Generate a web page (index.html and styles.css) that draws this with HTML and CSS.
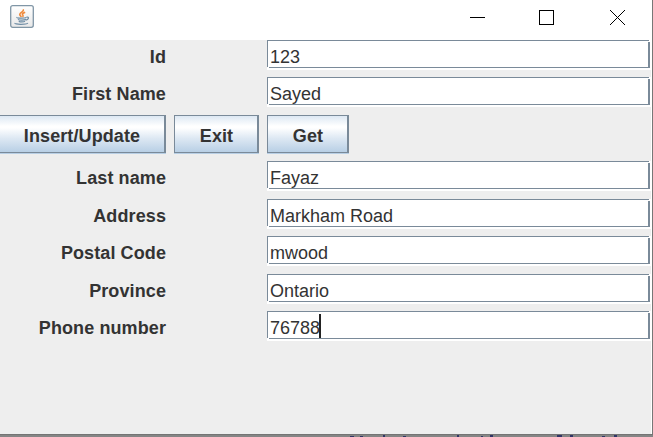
FILE: index.html
```
<!DOCTYPE html>
<html lang="en">
<head>
<meta charset="utf-8">
<title>Form</title>
<link rel="stylesheet" href="styles.css">
</head>
<body>
<main class="window">
  <header class="titlebar">
    <svg class="java" width="26" height="26" viewBox="0 0 26 26">
      <defs><linearGradient id="tile" x1="0" y1="0" x2="0" y2="1"><stop offset="0" stop-color="#fff"/><stop offset="1" stop-color="#e8e8e8"/></linearGradient></defs>
      <rect x=".7" y=".7" width="22.600" height="21.600" rx="2" fill="url(#tile)" stroke="#8096a6" stroke-width="1.300"/>
      <path d="M13.200 4.300c1.200 2.600-4.600 3.700-3.300 5.900.4.700 1.200 1.100 1.500 1.700M15.200 7.200c-2.800 1-3.400 2-2.300 3 .5.500.2 1.100-.4 1.700" fill="none" stroke="#ef8a3c" stroke-width="1.600"/>
      <path d="M7 12.300c-1.200 1 7.500 1.200 9.300.1M8 14.300c1 1.100 6.200 1 8 .1M8.800 16.200c1.300 1 5 .9 6.200.1M16.500 12.100c3.200-.5 2.200 2.600-.8 3.100M5 18c-1 1.700 11.400 1.700 12.900.2" fill="none" stroke="#6f8da5" stroke-width="1.200"/>
    </svg>
    <svg class="controls" width="155" height="16" viewBox="0 0 155 16" fill="none" stroke="#000" shape-rendering="crispEdges">
      <path d="M0 7.500h15M69.500.5h14v14h-14z"/>
      <path d="M140 0l15 15M155 0l-15 15" shape-rendering="auto"/>
    </svg>
  </header>
  <form class="form">
    <span class="label">Id</span><span class="field">123</span>
    <span class="label">First Name</span><span class="field">Sayed</span>
    <button class="button" type="button">Insert/Update</button><button class="button" type="button">Exit</button><button class="button get" type="button">Get</button>
    <span class="label">Last name</span><span class="field">Fayaz</span>
    <span class="label">Address</span><span class="field">Markham Road</span>
    <span class="label">Postal Code</span><span class="field">mwood</span>
    <span class="label">Province</span><span class="field">Ontario</span>
    <span class="label">Phone number</span><span class="field">76788<i class="caret"></i></span>
  </form>
</main>
<svg class="backdrop" width="653" height="3" viewBox="0 0 653 3" shape-rendering="crispEdges">
  <path d="M0 0h653v1H0z" fill="#747474"/>
  <path d="M0 1h653v2H0z" fill="#858585"/>
  <path d="M350 2.500h4M360 2.500h3M383 2h2M403 2.500h3M457 2h2M481 2.500h2M490 2h3M557 2h5M570 2h3M602 2.500h3M614 2h3" stroke="#303566" stroke-width="1.500"/>
</svg>
</body>
</html>
```
FILE: styles.css
```
body {
  margin: 0;
  overflow: hidden;
  height: 437px;
  background: #777;
  font-family: "Liberation Sans", Arial, sans-serif;
  font-size: 18px;
  color: #333;
}
.window {
  width: 652px;
  height: 434px;
  box-sizing: border-box;
  border-right: 1px solid #fff;
  background: #eee;
}
.titlebar {
  display: flex;
  justify-content: space-between;
  height: 40px;
  box-sizing: border-box;
  padding: 5px 26px 0 10px;
  background: #fff;
}
.controls { margin-top: 5px; }
.form {
  display: grid;
  grid-template-columns: 166px 85px 384px;
  grid-template-rows: 37px 38px 46px 38px 37px 38px 37px 30px;
  column-gap: 8px;
  align-items: start;
}
.label {
  grid-column: 1;
  text-align: right;
  font-weight: bold;
  line-height: 20px;
  padding-top: 7px;
  letter-spacing: 0.1px;
  white-space: nowrap;
}
.field {
  grid-column: 3;
  display: flex;
  height: 30px;
  box-sizing: border-box;
  padding: 7px 0 0 3px;
  line-height: 20px;
  white-space: nowrap;
  background:
    linear-gradient(#7a8a99, #7a8a99) 0 0 / 382px 1px no-repeat,
    linear-gradient(#7a8a99, #7a8a99) 0 0 / 1px 27px no-repeat,
    linear-gradient(#7a8a99, #7a8a99) 2px 27px / 381px 1px no-repeat,
    linear-gradient(#7a8a99, #7a8a99) 381px 2px / 2px 26px no-repeat,
    #fff;
}
.caret {
  width: 2px;
  height: 24px;
  margin: -4px 0 0 -1px;
  background: #222;
}
.button {
  height: 38px;
  margin: 0;
  padding: 4px 0 0 1px;
  border: solid #7a8a99;
  border-width: 1px 2px 1px 1px;
  box-shadow: 0 1px #b8cfe5;
  background: linear-gradient(#dde8f3 0%, #fff 28%, #fff 33%, #dde8f3 62%, #b8cfe5 100%);
  font: bold 18px/20px "Liberation Sans", Arial, sans-serif;
  letter-spacing: 0.1px;
  color: #333;
}
.button:first-of-type {
  border-left: 0;
  padding-left: 0;
}
.get { width: 82px; }
.backdrop { display: block; }
```
